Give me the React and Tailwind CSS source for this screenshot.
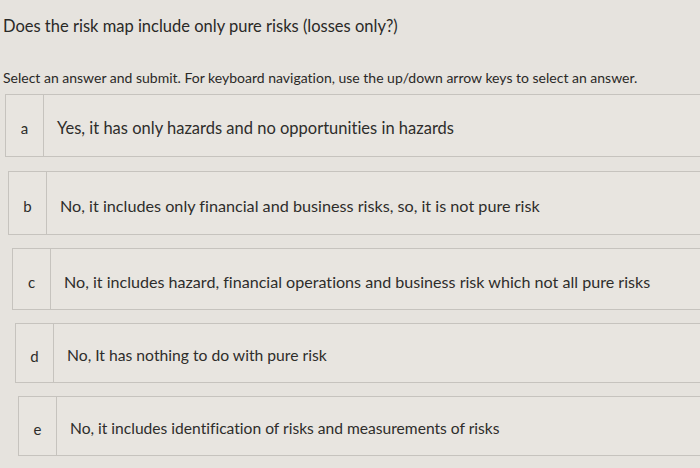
import React from 'react';

const options = [
  { key: 'a', text: 'Yes, it has only hazards and no opportunities in hazards', ml: 'ml-[5px]', mt: 'mt-[0px]', h: 'h-[63px]', size: 'text-[16.5px]' },
  { key: 'b', text: 'No, it includes only financial and business risks, so, it is not pure risk', ml: 'ml-[8px]', mt: 'mt-[14px]', h: 'h-[64px]', size: 'text-[16.2px]' },
  { key: 'c', text: 'No, it includes hazard, financial operations and business risk which not all pure risks', ml: 'ml-[12px]', mt: 'mt-[13px]', h: 'h-[62px]', size: 'text-[16.1px]' },
  { key: 'd', text: 'No, It has nothing to do with pure risk', ml: 'ml-[15px]', mt: 'mt-[13px]', h: 'h-[60px]', size: 'text-[15.7px]' },
  { key: 'e', text: 'No, it includes identification of risks and measurements of risks', ml: 'ml-[18px]', mt: 'mt-[13px]', h: 'h-[60px]', size: 'text-[15.6px]' },
];

const App = () => {
  return (
    <div
      className="w-[700px] h-[468px] overflow-hidden bg-[#e6e3de] text-[#2e2d2b] [font-variant-ligatures:none]"
      style={{ fontFamily: 'Lato, "Open Sans", sans-serif' }}
    >
      <h1 className="pt-[15px] pl-[3px] text-[16.5px] leading-[22px] text-[#2a2927]">
        Does the risk map include only pure risks (losses only?)
      </h1>
      <p className="mt-[32px] pl-[3px] text-[14px] leading-[18px] text-[#2a2927]">
        Select an answer and submit. For keyboard navigation, use the up/down arrow keys to select an answer.
      </p>

      <div className="mt-[7px] flex flex-col">
        {options.map((o) => (
          <div
            key={o.key}
            className={`${o.ml} ${o.mt} ${o.h} flex border border-r-0 border-[#c6c3be] bg-[#e8e5e0]`}
          >
            <div className="w-[38px] shrink-0 flex items-center justify-center pt-[6px] border-r border-[#c6c3be] text-[15px]">
              {o.key}
            </div>
            <div className={`flex items-center pt-[6px] pl-[13px] whitespace-nowrap ${o.size}`}>
              {o.text}
            </div>
          </div>
        ))}
      </div>
    </div>
  );
};

export default App;
